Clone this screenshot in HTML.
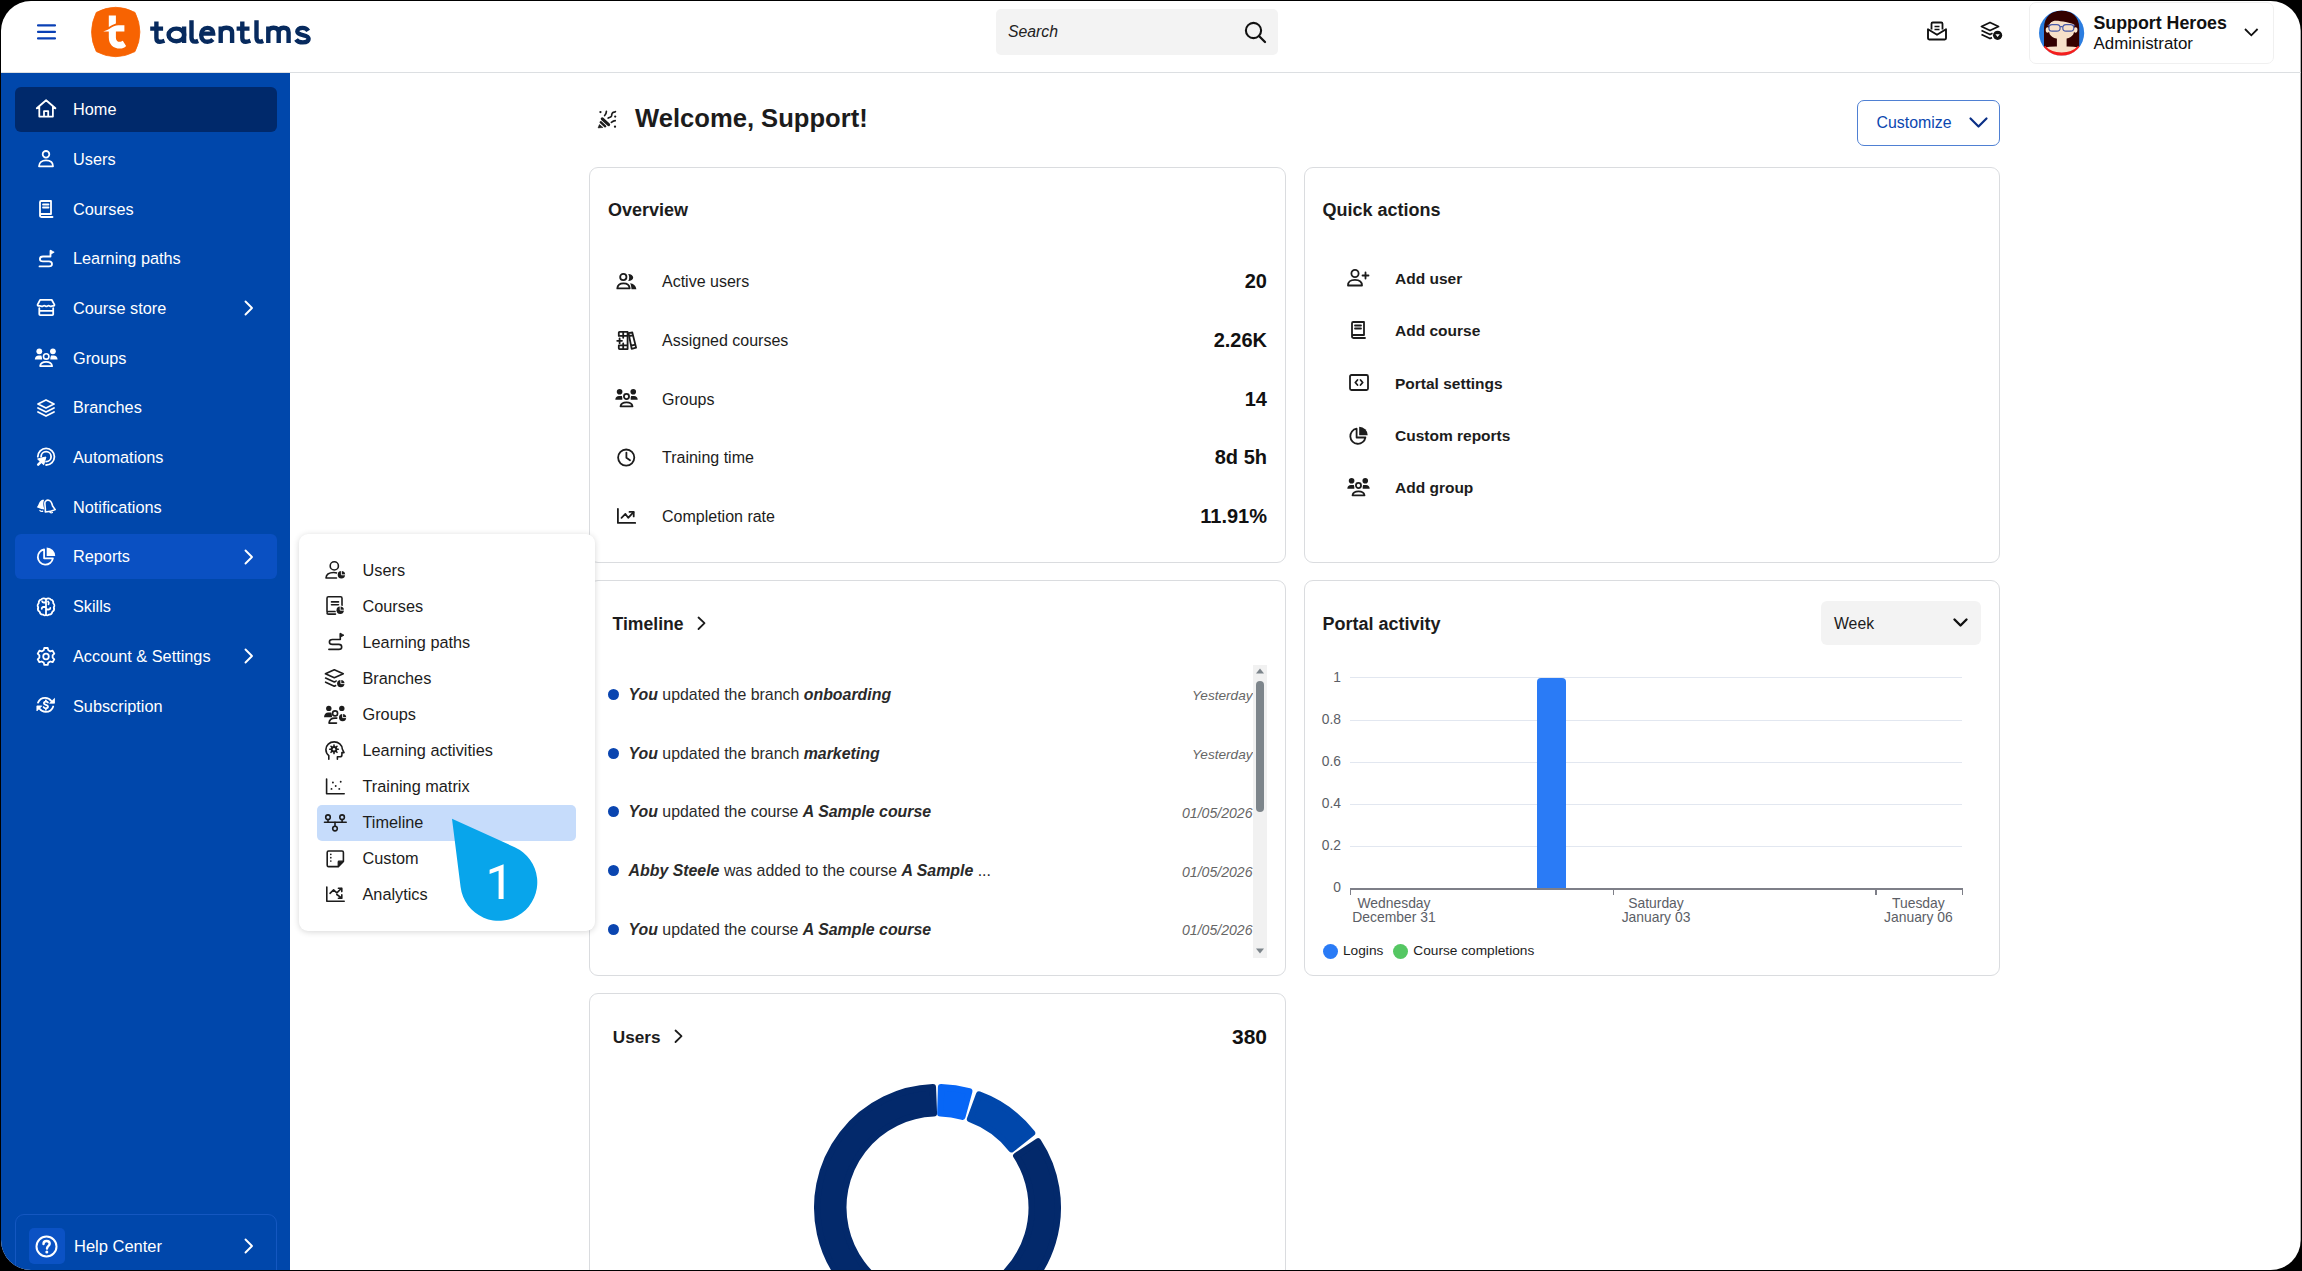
<!DOCTYPE html>
<html><head><meta charset="utf-8"><title>talentlms</title>
<style>
html,body{margin:0;padding:0;background:#000;width:2302px;height:1271px;overflow:hidden}
#frame{position:absolute;left:0;top:0;width:2302px;height:1271px;overflow:hidden;background:#fff;clip-path:inset(1px 1.3px 1px 1px round 30px)}
#ring{position:absolute;left:0;top:0;width:2302px;height:1271px;box-sizing:border-box;border:1px solid #000;border-right-width:2px;border-radius:31px;z-index:99;pointer-events:none}
.t{position:absolute;white-space:nowrap;line-height:1em;font-family:"Liberation Sans", sans-serif}
svg{overflow:visible}
</style></head><body>
<div id="frame">
<div style="position:absolute;left:0px;top:72px;width:2302px;height:1px;background:#dcdfe2"></div>
<svg style="position:absolute;left:36px;top:23px;" width="20" height="18" viewBox="0 0 20 18"><path d="M2 2.4H19M2 8.9H19M2 15.4H19" stroke="#0a40b5" stroke-width="2.1" stroke-linecap="round"/></svg>
<svg style="position:absolute;left:90px;top:6px;" width="52" height="52" viewBox="0 0 52 52"><path d="M6.3 6.4Q25.6 -3.8 45 6.4Q54.8 26 45 45.6Q25.6 55.8 6.3 45.6Q-3.2 26 6.3 6.4Z" fill="#f76302" stroke="#f76302" stroke-width="0.8" stroke-linejoin="round"/><path d="M18.8 9.5H25.9V17.4C23.5 18.2 21 19.5 18.8 21Z" fill="#fff"/><path d="M13.2 25.4C16 24.6 18.5 23.3 21 21.7C23.5 20.1 25.5 19.2 28.2 19.2H34.4V25.6H25.9V31.9C25.9 34.3 27.5 35.8 29.5 35.8C30.8 35.8 32 35.3 32.8 34.8L36.1 40C34.5 41.8 32.2 42.6 29.9 42.6C23.5 42.6 18.8 38.5 18.8 31.5V25.6Z" fill="#fff"/></svg>
<svg style="position:absolute;left:0px;top:0px;" width="400" height="72" viewBox="0 0 400 72"><g fill="none" stroke="#072a5e" stroke-width="4.4"><path d="M156.4 21.5V38C156.4 40.8 157.8 41.8 160 41.8C161.5 41.8 162.8 41.4 164.5 40.8M150.2 28.6H163.1"/><ellipse cx="176.4" cy="34.9" rx="7.8" ry="6.3"/><path d="M184.1 26.4V43"/><path d="M191.5 20.3V37.5C191.5 40.5 193 41.6 195 41.6C196.3 41.6 197.2 41.3 198.2 40.9"/><path d="M201.8 33.6H213.2C213.2 29.8 210.8 27.9 207.4 27.9C203.6 27.9 201.2 30.8 201.2 34.9C201.2 39 203.8 41.8 207.6 41.8C209.8 41.8 211.6 40.9 212.9 39.5"/><path d="M220.7 26.4V43M220.7 33C220.7 29.5 223 27.8 226.4 27.8C229.8 27.8 232.1 29.5 232.1 33V43"/><path d="M242.3 21.5V38C242.3 40.8 243.7 41.8 245.9 41.8C247.4 41.8 248.7 41.4 250.4 40.8M236.6 28.6H249.5"/><path d="M256.5 20.3V37.5C256.5 40.5 258 41.6 260 41.6C261.3 41.6 262.2 41.3 263.2 40.9"/><path d="M268.3 26.4V43M268.3 32.5C268.3 29.3 270.2 27.8 273.5 27.8C276.8 27.8 278.7 29.3 278.7 32.5V43M278.7 32.5C278.7 29.3 280.6 27.8 283.6 27.8C286.8 27.8 288.6 29.3 288.6 32.5V43"/><path d="M308.2 30.8C307 28.9 305.2 27.9 302.6 27.9C299.2 27.9 297.3 29.5 297.3 31.6C297.3 36.2 308.6 34 308.6 38.8C308.6 41 306.4 42.4 302.8 42.4C299.8 42.4 297.4 41.4 296 39.4"/></g></svg>
<div style="position:absolute;left:996px;top:9px;width:282px;height:46px;background:#f3f3f3;border-radius:5px"></div>
<div class="t" style="left:1008px;top:24.07px;font-size:15.8px;color:#222;font-weight:normal;font-style:italic;">Search</div>
<svg style="position:absolute;left:1244px;top:21px;" width="23" height="23" viewBox="0 0 23 23"><circle cx="9.5" cy="9.5" r="7.6" fill="none" stroke="#111" stroke-width="2.1"/><path d="M15 15L21 21" stroke="#111" stroke-width="2.3" stroke-linecap="round"/></svg>
<svg style="position:absolute;left:1926px;top:21px;" width="22" height="20" viewBox="0 0 22 20"><path d="M5.5 8.5V2.8C5.5 2 6 1.5 6.8 1.5H15.2C16 1.5 16.5 2 16.5 2.8V8.5" fill="none" stroke="#111" stroke-width="1.8"/><path d="M8.5 5.5H13.5M8.5 8.5H13.5" stroke="#111" stroke-width="1.7"/><path d="M2 8.2V17.3C2 18 2.5 18.5 3.2 18.5H18.8C19.5 18.5 20 18 20 17.3V8.2L11 13.8Z" fill="none" stroke="#111" stroke-width="1.9" stroke-linejoin="round"/></svg>
<svg style="position:absolute;left:1979px;top:21px;" width="24" height="20" viewBox="0 0 24 20"><path d="M11 1.5L19.5 5.5L11 9.5L2.5 5.5Z" fill="none" stroke="#111" stroke-width="1.8" stroke-linejoin="round"/><path d="M2.5 9.5L11 13.5L13.5 12.3M2.5 13.5L11 17.5L13 16.6" fill="none" stroke="#111" stroke-width="1.8" stroke-linejoin="round"/><circle cx="18.6" cy="14.3" r="4.6" fill="#111"/><path d="M16.4 13.2H20.8L18.6 15.9Z" fill="#fff"/></svg>
<div style="position:absolute;left:2029px;top:2px;width:245px;height:62px;border:1px solid #f0f0f0;border-radius:7px;box-sizing:border-box"></div>
<svg style="position:absolute;left:2039px;top:10px;" width="46" height="46" viewBox="0 0 46 46"><defs><clipPath id="av"><circle cx="22.6" cy="23" r="22.6"/></clipPath></defs>
<g clip-path="url(#av)"><rect x="-1" y="-1" width="48" height="48" fill="#2b7de0"/>
<path d="M5 37.5V18C5 7 12.5 0.6 22.6 0.6C32.7 0.6 40.2 7 40.2 18V37.5Z" fill="#330000"/>
<ellipse cx="8.6" cy="20" rx="1.9" ry="2.8" fill="#fbe6cf"/><ellipse cx="36.6" cy="20" rx="1.9" ry="2.8" fill="#fbe6cf"/>
<path d="M10 16C10 12 15 10 22.5 10C30 10 35.1 12 35.1 16V21C35.1 26 30 29.2 22.5 29.2C15 29.2 10 26 10 21Z" fill="#f7e0c9"/>
<path d="M9.5 15.5C10.5 12.5 13 10.8 15.7 10C19 11.2 28 11.5 35.6 14.5L35.8 9H9.2Z" fill="#330000"/>
<rect x="17.9" y="27" width="9.7" height="11" fill="#f7e0c9"/>
<path d="M-1 47V38.5C6 36.8 14 36.4 22.6 36.4C31 36.4 39 36.8 47 38.5V47Z" fill="#f7e0c9"/>
<path d="M4.5 37.2C9 42.6 15 44.6 22.6 44.6C30.2 44.6 36.2 42.6 40.7 37.2" fill="none" stroke="#f41d1d" stroke-width="4.2"/>
<rect x="9.9" y="14.6" width="11.2" height="6.6" rx="3.2" fill="none" stroke="#4a5aa8" stroke-width="1.2"/>
<rect x="23.8" y="14.6" width="11" height="6.6" rx="3.2" fill="none" stroke="#4a5aa8" stroke-width="1.2"/>
<path d="M21.1 16.6H23.8M8.6 15.2H10.5M34.3 15.2H36.2" stroke="#4a5aa8" stroke-width="1.1"/></g></svg>
<div class="t" style="left:2093.5px;top:14.67px;font-size:17.8px;color:#111;font-weight:bold;font-style:normal;">Support Heroes</div>
<div class="t" style="left:2093.5px;top:35.84px;font-size:16.9px;color:#111;font-weight:normal;font-style:normal;">Administrator</div>
<svg style="position:absolute;left:2243px;top:27px;" width="17" height="11" viewBox="0 0 17 11"><path d="M2 2L8.3 8.3L14.6 2" fill="none" stroke="#111" stroke-width="1.8"/></svg>
<div style="position:absolute;left:0px;top:73px;width:290px;height:1200px;background:#0047ab"></div>
<div style="position:absolute;left:15px;top:87px;width:262px;height:45px;background:#00296b;border-radius:6px"></div>
<div style="position:absolute;left:15px;top:533.5px;width:262px;height:45px;background:#0a50c2;border-radius:6px"></div>
<svg style="position:absolute;left:36px;top:99px;" width="20" height="20" viewBox="0 0 20 20"><path d="M0.8 9.3L10.1 1.2L19.4 9.3M3.3 7.5V17.6H16.9V7.5M8 17.6V12.2H12.2V17.6" stroke="#fff" fill="none" stroke-width="1.8" stroke-linecap="round" stroke-linejoin="round" stroke-width="1.9"/></svg>
<div class="t" style="left:73px;top:101.14px;font-size:16.3px;color:#fff;font-weight:normal;font-style:normal;">Home</div>
<svg style="position:absolute;left:36px;top:149.2px;" width="20" height="20" viewBox="0 0 20 20"><circle cx="10" cy="5.3" r="3.3" stroke="#fff" fill="none" stroke-width="1.8" stroke-linecap="round" stroke-linejoin="round"/><path d="M3 17.3C3 13.3 6 11.4 10 11.4C14 11.4 17 13.3 17 17.3Z" stroke="#fff" fill="none" stroke-width="1.8" stroke-linecap="round" stroke-linejoin="round"/></svg>
<div class="t" style="left:73px;top:150.84px;font-size:16.3px;color:#fff;font-weight:normal;font-style:normal;">Users</div>
<svg style="position:absolute;left:36px;top:198.9px;" width="20" height="20" viewBox="0 0 20 20"><path d="M4 17V3.2C4 2.5 4.5 2 5.2 2H15V15H5.5C4.6 15 4 15.7 4 16.5C4 17.3 4.6 18 5.5 18H16.5" stroke="#fff" fill="none" stroke-width="1.8" stroke-linecap="round" stroke-linejoin="round"/><path d="M7 5.5H12.5M7 8.5H12.5" stroke="#fff" fill="none" stroke-width="1.8" stroke-linecap="round" stroke-linejoin="round"/></svg>
<div class="t" style="left:73px;top:200.55px;font-size:16.3px;color:#fff;font-weight:normal;font-style:normal;">Courses</div>
<svg style="position:absolute;left:36px;top:248.60000000000002px;" width="20" height="20" viewBox="0 0 20 20"><path d="M14.5 7.5H7C5 7.5 3.9 8.7 3.9 10C3.9 11.3 5 12.4 7 12.4H13C15 12.4 16 13.6 16 15C16 16.4 15 17.4 13 17.4H3.5M14.5 7.5V1.8" stroke="#fff" fill="none" stroke-width="1.8" stroke-linecap="round" stroke-linejoin="round"/><path d="M14.5 1.2L18.2 3.2L14.5 5.2Z" fill="#fff" stroke="#fff" stroke-width="0.8" stroke-linejoin="round"/></svg>
<div class="t" style="left:73px;top:250.25px;font-size:16.3px;color:#fff;font-weight:normal;font-style:normal;">Learning paths</div>
<svg style="position:absolute;left:36px;top:298.3px;" width="20" height="20" viewBox="0 0 20 20"><path d="M4.1 1.8H15.7L18.4 6.6C18.6 7.5 17.9 8.1 17 7.9C16.3 7.7 15.5 8.4 14.8 8.4C14 8.4 13.4 7.6 12.6 7.6C11.8 7.6 11.2 8.4 10.4 8.4C9.6 8.4 9 7.6 8.2 7.6C7.4 7.6 6.8 8.4 6 8.4C5.2 8.4 4.4 7.7 3.4 7.9C2.3 8.1 1.3 7.5 1.6 6.6Z" stroke="#fff" fill="none" stroke-width="1.8" stroke-linecap="round" stroke-linejoin="round" stroke-width="1.7"/><path d="M3.3 10.1V16.3C3.3 16.9 3.8 17.2 4.3 17.2H16.2C16.7 17.2 17.2 16.9 17.2 16.3V10.1M3.3 12.8H17.2" stroke="#fff" fill="none" stroke-width="1.8" stroke-linecap="round" stroke-linejoin="round"/></svg>
<div class="t" style="left:73px;top:299.94px;font-size:16.3px;color:#fff;font-weight:normal;font-style:normal;">Course store</div>
<svg style="position:absolute;left:35px;top:348.0px;" width="20" height="20" viewBox="0 0 20 20"><circle cx="4.3" cy="3.3" r="2.9" fill="#fff"/><circle cx="17.9" cy="3.3" r="2.9" fill="#fff"/><path d="M-0.2 11.6C0 9 1.5 7.6 3.8 7.6H6.3C6.8 8.8 7.1 10 7.1 11.6Z" fill="#fff"/><path d="M22.6 11.6C22.4 9 20.9 7.6 18.6 7.6H16.1C15.6 8.8 15.3 10 15.3 11.6Z" fill="#fff"/><circle cx="11.2" cy="8.4" r="2.7" stroke="#fff" stroke-width="1.6" fill="none"/><path d="M5 18.1C5.5 15 8 13.9 11.1 13.9C14.2 13.9 16.7 15 17.2 18.1Z" stroke="#fff" stroke-width="1.6" fill="none" stroke-linejoin="round"/></svg>
<div class="t" style="left:73px;top:349.64px;font-size:16.3px;color:#fff;font-weight:normal;font-style:normal;">Groups</div>
<svg style="position:absolute;left:36px;top:397.7px;" width="20" height="20" viewBox="0 0 20 20"><path d="M10 2L18 6L10 10L2 6Z" stroke="#fff" fill="none" stroke-width="1.8" stroke-linecap="round" stroke-linejoin="round"/><path d="M2 10L10 14L18 10M2 14L10 18L18 14" stroke="#fff" fill="none" stroke-width="1.8" stroke-linecap="round" stroke-linejoin="round"/></svg>
<div class="t" style="left:73px;top:399.34px;font-size:16.3px;color:#fff;font-weight:normal;font-style:normal;">Branches</div>
<svg style="position:absolute;left:36px;top:447.4px;" width="20" height="20" viewBox="0 0 20 20"><path d="M1.8 9.7A8.3 8.3 0 1 1 10.1 18M5.1 9.7A5 5 0 1 1 10.1 14.7" stroke="#fff" fill="none" stroke-width="1.8" stroke-linecap="round" stroke-linejoin="round"/><path d="M9.9 10L1.6 12L7.7 17.8Z" fill="#fff" stroke="#fff" stroke-width="1" stroke-linejoin="round"/><path d="M2.2 17.6L5.5 14.3" stroke="#fff" stroke-width="2.5" stroke-linecap="round"/></svg>
<div class="t" style="left:73px;top:449.04px;font-size:16.3px;color:#fff;font-weight:normal;font-style:normal;">Automations</div>
<svg style="position:absolute;left:36px;top:497.1px;" width="20" height="20" viewBox="0 0 20 20"><path d="M0.8 10.3C2.3 8.8 2.8 6.5 3.8 4.8C4.8 3.2 6.3 2.6 8.2 2.8C7.2 4.6 7.1 7.2 7.6 9.6L8.4 12.5C5.8 12.3 3.3 11.6 0.8 10.3Z" fill="#fff"/><path d="M4 13.6Q5 14.7 6.6 14.3M14 15.3Q15.2 16.3 16.4 15.5" stroke="#fff" stroke-width="1.4" fill="none" stroke-linecap="round"/><path d="M9.3 4.6C10.3 3.2 12.2 2.9 13.7 3.6C15.6 4.5 16.1 6.9 16.6 9L19.2 12.6C16.2 14.1 12.3 14.8 9.3 15C9.6 12 9.1 9.2 8.9 7.2C8.8 6.1 8.9 5.2 9.3 4.6Z" stroke="#fff" stroke-width="1.6" fill="none" stroke-linejoin="round"/></svg>
<div class="t" style="left:73px;top:498.75px;font-size:16.3px;color:#fff;font-weight:normal;font-style:normal;">Notifications</div>
<svg style="position:absolute;left:36px;top:546.8px;" width="20" height="20" viewBox="0 0 20 20"><path d="M8.1 2.5A7.6 7.6 0 1 0 16.9 11.3H8.1Z" stroke="#fff" fill="none" stroke-width="1.8" stroke-linecap="round" stroke-linejoin="round"/><path d="M10.7 0.5V9.1H19.2A8.5 8.5 0 0 0 10.7 0.5Z" fill="#fff"/></svg>
<div class="t" style="left:73px;top:548.44px;font-size:16.3px;color:#fff;font-weight:normal;font-style:normal;">Reports</div>
<svg style="position:absolute;left:36px;top:596.5px;" width="20" height="20" viewBox="0 0 20 20"><path d="M10 2.2C8.6 0.9 6.2 1 5 2.7C3.3 3 2.5 4.6 2.8 6.1C1.5 7.1 1.3 9.2 2.2 10.4C1.6 12 2.2 14 3.6 14.7C3.9 16.6 5.6 17.8 7.3 17.6C8.3 18.6 9.3 18.6 10 17.9C10.7 18.6 11.7 18.6 12.7 17.6C14.4 17.8 16.1 16.6 16.4 14.7C17.8 14 18.4 12 17.8 10.4C18.7 9.2 18.5 7.1 17.2 6.1C17.5 4.6 16.7 3 15 2.7C13.8 1 11.4 0.9 10 2.2Z" stroke="#fff" fill="none" stroke-width="1.8" stroke-linecap="round" stroke-linejoin="round" stroke-width="1.7"/><path d="M10 2.5V17.6M10 5.5H8C7 5.5 6.3 5 6.2 4.3M10 10H7.3C6.3 10 5.8 10.8 5.8 11.8M10 12.5H12.8C13.8 12.5 14.3 11.8 14.3 11M12 4.5C12.8 5.2 13 6.5 12.5 7.3" stroke="#fff" fill="none" stroke-width="1.8" stroke-linecap="round" stroke-linejoin="round" stroke-width="1.4"/></svg>
<div class="t" style="left:73px;top:598.14px;font-size:16.3px;color:#fff;font-weight:normal;font-style:normal;">Skills</div>
<svg style="position:absolute;left:36px;top:646.2px;" width="20" height="20" viewBox="0 0 20 20"><path d="M8.3 2H11.7L12.3 4.3L14.3 5.4L16.6 4.7L18.3 7.6L16.6 9.3V11.6L18.3 13.3L16.6 16.2L14.3 15.5L12.3 16.6L11.7 18.9H8.3L7.7 16.6L5.7 15.5L3.4 16.2L1.7 13.3L3.4 11.6V9.3L1.7 7.6L3.4 4.7L5.7 5.4L7.7 4.3Z" stroke="#fff" fill="none" stroke-width="1.8" stroke-linecap="round" stroke-linejoin="round"/><circle cx="10" cy="10.5" r="2.8" stroke="#fff" fill="none" stroke-width="1.8" stroke-linecap="round" stroke-linejoin="round"/></svg>
<div class="t" style="left:73px;top:647.85px;font-size:16.3px;color:#fff;font-weight:normal;font-style:normal;">Account &amp; Settings</div>
<svg style="position:absolute;left:36px;top:695.9px;" width="20" height="20" viewBox="0 0 20 20"><path d="M2 6.6C3.3 3.5 6 1.8 9.2 1.8C11.8 1.8 14 3 15.3 5" stroke="#fff" fill="none" stroke-width="1.8" stroke-linecap="round" stroke-linejoin="round" stroke-width="1.9"/><path d="M18.5 2.4V7.2H13.6Z" fill="#fff" stroke="#fff" stroke-width="0.8" stroke-linejoin="round"/><path d="M17.2 10.5C16.2 13.8 13.2 15.9 9.7 15.9C7.2 15.9 5 14.8 3.6 12.8" stroke="#fff" fill="none" stroke-width="1.8" stroke-linecap="round" stroke-linejoin="round" stroke-width="1.9"/><path d="M0.9 9.9H5.8L0.9 14.9Z" fill="#fff" stroke="#fff" stroke-width="0.8" stroke-linejoin="round"/><path d="M11.9 6.6C11.5 6 10.8 5.7 9.9 5.7C8.7 5.7 7.9 6.4 7.9 7.3C7.9 9.3 12 8.4 12 10.6C12 11.6 11.1 12.3 9.8 12.3C8.8 12.3 8 11.8 7.6 11.1M9.9 4.3V5.7M9.9 12.3V13.8" stroke="#fff" fill="none" stroke-width="1.8" stroke-linecap="round" stroke-linejoin="round" stroke-width="1.5"/></svg>
<div class="t" style="left:73px;top:697.54px;font-size:16.3px;color:#fff;font-weight:normal;font-style:normal;">Subscription</div>
<svg style="position:absolute;left:243px;top:300.3px;" width="12" height="16" viewBox="0 0 12 16"><path d="M2.5 1.5L9 8L2.5 14.5" fill="none" stroke="#fff" stroke-width="1.9" stroke-linecap="round" stroke-linejoin="round"/></svg>
<svg style="position:absolute;left:243px;top:548.8px;" width="12" height="16" viewBox="0 0 12 16"><path d="M2.5 1.5L9 8L2.5 14.5" fill="none" stroke="#fff" stroke-width="1.9" stroke-linecap="round" stroke-linejoin="round"/></svg>
<svg style="position:absolute;left:243px;top:648.2px;" width="12" height="16" viewBox="0 0 12 16"><path d="M2.5 1.5L9 8L2.5 14.5" fill="none" stroke="#fff" stroke-width="1.9" stroke-linecap="round" stroke-linejoin="round"/></svg>
<div style="position:absolute;left:15px;top:1214px;width:262px;height:70px;border:1px solid #1457c0;border-radius:9px;box-sizing:border-box"></div>
<div style="position:absolute;left:29px;top:1228px;width:36px;height:36px;background:#0b52c4;border-radius:5px"></div>
<svg style="position:absolute;left:35px;top:1235px;" width="24" height="24" viewBox="0 0 24 24"><circle cx="11.5" cy="11.5" r="10" fill="none" stroke="#fff" stroke-width="2"/><path d="M8.5 9C8.5 7.2 9.8 6 11.6 6C13.4 6 14.7 7.2 14.7 8.8C14.7 10.8 12 11 12 13.5" fill="none" stroke="#fff" stroke-width="2.4" stroke-linecap="round"/><circle cx="11.8" cy="17" r="1.5" fill="#fff"/></svg>
<div class="t" style="left:74px;top:1237.97px;font-size:16.5px;color:#fff;font-weight:normal;font-style:normal;">Help Center</div>
<svg style="position:absolute;left:243px;top:1238px;" width="12" height="16" viewBox="0 0 12 16"><path d="M2.5 1.5L9 8L2.5 14.5" fill="none" stroke="#fff" stroke-width="1.9" stroke-linecap="round" stroke-linejoin="round"/></svg>
<svg style="position:absolute;left:597px;top:110px;" width="21" height="20" viewBox="0 0 21 20"><path d="M1.1 17.9L2.4 14.6L5.9 17.5Z" fill="#1c1c1c" stroke="#1c1c1c" stroke-width="0.6" stroke-linejoin="round"/><path d="M3.7 12.2L8.2 16.3" stroke="#1c1c1c" stroke-width="2.3" stroke-linecap="round"/><path d="M5.3 8.9L11.6 14.6" stroke="#1c1c1c" stroke-width="3.1" stroke-linecap="round"/><circle cx="3.45" cy="2.1" r="1.15" fill="#1c1c1c"/><circle cx="18.2" cy="6.6" r="1.15" fill="#1c1c1c"/><circle cx="18" cy="16.7" r="1.15" fill="#1c1c1c"/><path d="M9.4 1.4C9.3 3.2 8.8 4.7 7.6 5.6M11.1 8.1C12.3 7.3 13.9 7.5 14.5 6C15 4.6 14.4 3.5 15.9 2.5C16.8 1.9 17.7 2.2 18.4 1.6M14.4 12.4C15.6 11.4 16.8 10.7 18.2 10.7" fill="none" stroke="#1c1c1c" stroke-width="1.7" stroke-linecap="round"/></svg>
<div class="t" style="left:635px;top:106.24px;font-size:25.6px;color:#1c1c1c;font-weight:bold;font-style:normal;">Welcome, Support!</div>
<div style="position:absolute;left:1857px;top:100px;width:143px;height:46px;border:1.5px solid #4f80d3;border-radius:7px;box-sizing:border-box"></div>
<div class="t" style="left:1876.5px;top:114.98px;font-size:15.9px;color:#0b47b0;font-weight:normal;font-style:normal;">Customize</div>
<svg style="position:absolute;left:1968px;top:116px;" width="21" height="13" viewBox="0 0 21 13"><path d="M2.5 2.5L10.5 10.5L18.5 2.5" fill="none" stroke="#0a2f86" stroke-width="2.2" stroke-linecap="round" stroke-linejoin="round"/></svg>
<div style="position:absolute;left:589px;top:167px;width:697px;height:396px;border:1px solid #dadcdf;border-radius:9px;box-sizing:border-box;background:#fff"></div>
<div style="position:absolute;left:1304px;top:167px;width:696px;height:396px;border:1px solid #dadcdf;border-radius:9px;box-sizing:border-box;background:#fff"></div>
<div style="position:absolute;left:589px;top:580px;width:697px;height:396px;border:1px solid #dadcdf;border-radius:9px;box-sizing:border-box;background:#fff"></div>
<div style="position:absolute;left:1304px;top:580px;width:696px;height:396px;border:1px solid #dadcdf;border-radius:9px;box-sizing:border-box;background:#fff"></div>
<div style="position:absolute;left:589px;top:993px;width:697px;height:400px;border:1px solid #dadcdf;border-radius:9px;box-sizing:border-box;background:#fff"></div>
<div class="t" style="left:608px;top:200.70px;font-size:18px;color:#1c1c1c;font-weight:bold;font-style:normal;">Overview</div>
<svg style="position:absolute;left:615.5px;top:271.5px;" width="21" height="20" viewBox="0 0 21 20"><circle cx="7.3" cy="5" r="3.15" stroke="#1c1c1c" fill="none" stroke-width="1.8" stroke-linecap="round" stroke-linejoin="round" stroke-width="1.7"/><path d="M1.3 16.4C1.6 13 4 11.3 7.5 11.3C11 11.3 13.4 13 13.7 16.4Z" stroke="#1c1c1c" fill="none" stroke-width="1.8" stroke-linecap="round" stroke-linejoin="round" stroke-width="1.7"/><path d="M12.2 1.9C15 1.9 17.2 3.5 17.2 5.45C17.2 7.4 15 9 12.2 9C12.9 8 13.2 6.8 13.2 5.45C13.2 4.1 12.9 2.9 12.2 1.9Z" fill="#1c1c1c"/><path d="M14 11.3C17.5 11.5 19.8 13.5 20.4 17.2H15.5C15.3 14.5 14.9 12.6 14 11.3Z" fill="#1c1c1c"/></svg>
<div class="t" style="left:662px;top:274.40px;font-size:16px;color:#1c1c1c;font-weight:normal;font-style:normal;">Active users</div>
<div class="t" style="right:1035px;top:271.00px;font-size:20px;color:#111;font-weight:bold;font-style:normal;">20</div>
<svg style="position:absolute;left:615.5px;top:330.5px;" width="21" height="20" viewBox="0 0 21 20"><path d="M3.6 0.9H11.6V4.9H2.8V1.7C2.8 1.2 3.1 0.9 3.6 0.9ZM2.8 14.4H11.6V18.1H3.6C3.1 18.1 2.8 17.8 2.8 17.3ZM7.2 0.9V6.8M7.2 12.4V18.1M11.6 4.9V14.4" stroke="#1c1c1c" fill="none" stroke-width="1.8" stroke-linecap="round" stroke-linejoin="round" stroke-width="1.7"/><path d="M12.5 2.1L16.3 1.5L20.1 16.6L15.7 17.8ZM13.2 5L17 4.3M15.1 14.6L19.4 13.6" stroke="#1c1c1c" fill="none" stroke-width="1.8" stroke-linecap="round" stroke-linejoin="round" stroke-width="1.7"/><path d="M1.2 9.8H6M3.6 7.4V12.2" stroke="#1c1c1c" fill="none" stroke-width="1.8" stroke-linecap="round" stroke-linejoin="round" stroke-width="1.8"/></svg>
<div class="t" style="left:662px;top:333.40px;font-size:16px;color:#1c1c1c;font-weight:normal;font-style:normal;">Assigned courses</div>
<div class="t" style="right:1035px;top:330.00px;font-size:20px;color:#111;font-weight:bold;font-style:normal;">2.26K</div>
<svg style="position:absolute;left:615.5px;top:388.5px;" width="21" height="20" viewBox="0 0 21 20"><circle cx="3.6" cy="2.8" r="2.8" fill="#1c1c1c"/><circle cx="17.25" cy="2.8" r="2.8" fill="#1c1c1c"/><path d="M-0.7 10.8C-0.5 8.3 0.8 7.05 3 7.05H5.9C6.3 8.2 6.4 9.5 6.3 10.8Z" fill="#1c1c1c"/><path d="M21.7 10.8C21.5 8.3 20.2 7.05 18 7.05H15.1C14.7 8.2 14.6 9.5 14.7 10.8Z" fill="#1c1c1c"/><circle cx="10.48" cy="7.5" r="2.55" stroke="#1c1c1c" fill="none" stroke-width="1.8" stroke-linecap="round" stroke-linejoin="round" stroke-width="1.6"/><path d="M4.5 17.3C5 14.5 7.2 13.4 10.5 13.4C13.8 13.4 16 14.5 16.5 17.3Z" stroke="#1c1c1c" fill="none" stroke-width="1.8" stroke-linecap="round" stroke-linejoin="round" stroke-width="1.6"/></svg>
<div class="t" style="left:662px;top:391.90px;font-size:16px;color:#1c1c1c;font-weight:normal;font-style:normal;">Groups</div>
<div class="t" style="right:1035px;top:388.50px;font-size:20px;color:#111;font-weight:bold;font-style:normal;">14</div>
<svg style="position:absolute;left:615.5px;top:447.5px;" width="21" height="20" viewBox="0 0 21 20"><circle cx="10.2" cy="9.6" r="8.1" stroke="#1c1c1c" fill="none" stroke-width="1.8" stroke-linecap="round" stroke-linejoin="round"/><path d="M10.4 4.6V9.8L14 12.3" stroke="#1c1c1c" fill="none" stroke-width="1.8" stroke-linecap="round" stroke-linejoin="round"/></svg>
<div class="t" style="left:662px;top:450.40px;font-size:16px;color:#1c1c1c;font-weight:normal;font-style:normal;">Training time</div>
<div class="t" style="right:1035px;top:447.00px;font-size:20px;color:#111;font-weight:bold;font-style:normal;">8d 5h</div>
<svg style="position:absolute;left:615.5px;top:506.5px;" width="21" height="20" viewBox="0 0 21 20"><path d="M1.9 1.8V15.9H19.2" stroke="#1c1c1c" fill="none" stroke-width="1.8" stroke-linecap="round" stroke-linejoin="round"/><path d="M5.5 10.8L9.4 6.9L12.2 10.8L17.5 5.1" stroke="#1c1c1c" fill="none" stroke-width="1.8" stroke-linecap="round" stroke-linejoin="round"/><path d="M13.5 4.9H17.7V9.4" stroke="#1c1c1c" fill="none" stroke-width="1.8" stroke-linecap="round" stroke-linejoin="round"/></svg>
<div class="t" style="left:662px;top:509.40px;font-size:16px;color:#1c1c1c;font-weight:normal;font-style:normal;">Completion rate</div>
<div class="t" style="right:1035px;top:506.00px;font-size:20px;color:#111;font-weight:bold;font-style:normal;">11.91%</div>
<div class="t" style="left:1322.5px;top:200.70px;font-size:18px;color:#1c1c1c;font-weight:bold;font-style:normal;">Quick actions</div>
<svg style="position:absolute;left:1347px;top:267.5px;" width="23" height="20" viewBox="0 0 23 20"><circle cx="8" cy="5.5" r="3.6" stroke="#1c1c1c" fill="none" stroke-width="1.8" stroke-linecap="round" stroke-linejoin="round"/><path d="M1 17.5C1 13.5 3.5 11.8 8 11.8C12.5 11.8 15 13.5 15 17.5Z" stroke="#1c1c1c" fill="none" stroke-width="1.8" stroke-linecap="round" stroke-linejoin="round"/><path d="M18.5 4.5V10.5M15.5 7.5H21.5" stroke="#1c1c1c" fill="none" stroke-width="1.8" stroke-linecap="round" stroke-linejoin="round"/></svg>
<div class="t" style="left:1395px;top:270.82px;font-size:15.5px;color:#1c1c1c;font-weight:bold;font-style:normal;">Add user</div>
<svg style="position:absolute;left:1348px;top:319.9px;" width="23" height="20" viewBox="0 0 23 20"><path d="M4 17V3.2C4 2.5 4.5 2 5.2 2H16V15H5.5C4.6 15 4 15.7 4 16.5C4 17.3 4.6 18 5.5 18H17" stroke="#1c1c1c" fill="none" stroke-width="1.8" stroke-linecap="round" stroke-linejoin="round"/><path d="M7 5.5H13M7 8.5H13" stroke="#1c1c1c" fill="none" stroke-width="1.8" stroke-linecap="round" stroke-linejoin="round"/></svg>
<div class="t" style="left:1395px;top:323.22px;font-size:15.5px;color:#1c1c1c;font-weight:bold;font-style:normal;">Add course</div>
<svg style="position:absolute;left:1348px;top:372.3px;" width="23" height="20" viewBox="0 0 23 20"><rect x="2" y="3" width="18" height="15" rx="1.5" stroke="#1c1c1c" fill="none" stroke-width="1.8" stroke-linecap="round" stroke-linejoin="round"/><path d="M9.5 8L7.3 10.5L9.5 13M12.5 8L14.7 10.5L12.5 13" stroke="#1c1c1c" fill="none" stroke-width="1.8" stroke-linecap="round" stroke-linejoin="round" stroke-width="1.6"/></svg>
<div class="t" style="left:1395px;top:375.62px;font-size:15.5px;color:#1c1c1c;font-weight:bold;font-style:normal;">Portal settings</div>
<svg style="position:absolute;left:1348px;top:424.7px;" width="23" height="20" viewBox="0 0 23 20"><g transform="translate(0.5 1.2)"><path d="M8.1 2.5A7.6 7.6 0 1 0 16.9 11.3H8.1Z" stroke="#1c1c1c" fill="none" stroke-width="1.8" stroke-linecap="round" stroke-linejoin="round"/><path d="M10.7 0.5V9.1H19.2A8.5 8.5 0 0 0 10.7 0.5Z" fill="#1c1c1c"/></g></svg>
<div class="t" style="left:1395px;top:428.02px;font-size:15.5px;color:#1c1c1c;font-weight:bold;font-style:normal;">Custom reports</div>
<svg style="position:absolute;left:1348px;top:478.40000000000003px;" width="23" height="20" viewBox="0 0 23 20"><circle cx="3.6" cy="2.8" r="2.8" fill="#1c1c1c"/><circle cx="17.25" cy="2.8" r="2.8" fill="#1c1c1c"/><path d="M-0.7 10.8C-0.5 8.3 0.8 7.05 3 7.05H5.9C6.3 8.2 6.4 9.5 6.3 10.8Z" fill="#1c1c1c"/><path d="M21.7 10.8C21.5 8.3 20.2 7.05 18 7.05H15.1C14.7 8.2 14.6 9.5 14.7 10.8Z" fill="#1c1c1c"/><circle cx="10.48" cy="7.5" r="2.55" stroke="#1c1c1c" fill="none" stroke-width="1.8" stroke-linecap="round" stroke-linejoin="round" stroke-width="1.6"/><path d="M4.5 17.3C5 14.5 7.2 13.4 10.5 13.4C13.8 13.4 16 14.5 16.5 17.3Z" stroke="#1c1c1c" fill="none" stroke-width="1.8" stroke-linecap="round" stroke-linejoin="round" stroke-width="1.6"/></svg>
<div class="t" style="left:1395px;top:480.43px;font-size:15.5px;color:#1c1c1c;font-weight:bold;font-style:normal;">Add group</div>
<div class="t" style="left:612.5px;top:615.54px;font-size:17.6px;color:#1c1c1c;font-weight:bold;font-style:normal;">Timeline</div>
<svg style="position:absolute;left:696px;top:616px;" width="12" height="15" viewBox="0 0 12 15"><path d="M2.5 1.5L8.5 7.2L2.5 13" fill="none" stroke="#1c1c1c" stroke-width="1.8" stroke-linecap="round" stroke-linejoin="round"/></svg>
<div style="position:absolute;left:608px;top:688.7px;width:11px;height:11px;background:#0a45b0;border-radius:50%"></div>
<div class="t" style="left:628.5px;top:686.69px;font-size:15.9px;color:#2a2a2a;font-weight:normal;font-style:normal;"><b><i>You</i></b> updated the branch <b><i>onboarding</i></b></div>
<div class="t" style="right:1049.5px;top:688.64px;font-size:13.6px;color:#666;font-weight:normal;font-style:italic;">Yesterday</div>
<div style="position:absolute;left:608px;top:747.7px;width:11px;height:11px;background:#0a45b0;border-radius:50%"></div>
<div class="t" style="left:628.5px;top:745.69px;font-size:15.9px;color:#2a2a2a;font-weight:normal;font-style:normal;"><b><i>You</i></b> updated the branch <b><i>marketing</i></b></div>
<div class="t" style="right:1049.5px;top:747.64px;font-size:13.6px;color:#666;font-weight:normal;font-style:italic;">Yesterday</div>
<div style="position:absolute;left:608px;top:806.4px;width:11px;height:11px;background:#0a45b0;border-radius:50%"></div>
<div class="t" style="left:628.5px;top:804.38px;font-size:15.9px;color:#2a2a2a;font-weight:normal;font-style:normal;"><b><i>You</i></b> updated the course <b><i>A Sample course</i></b></div>
<div class="t" style="right:1049.5px;top:805.91px;font-size:14.1px;color:#666;font-weight:normal;font-style:italic;">01/05/2026</div>
<div style="position:absolute;left:608px;top:865.1px;width:11px;height:11px;background:#0a45b0;border-radius:50%"></div>
<div class="t" style="left:628.5px;top:863.09px;font-size:15.9px;color:#2a2a2a;font-weight:normal;font-style:normal;"><b><i>Abby Steele</i></b> was added to the course <b><i>A Sample</i></b> ...</div>
<div class="t" style="right:1049.5px;top:864.62px;font-size:14.1px;color:#666;font-weight:normal;font-style:italic;">01/05/2026</div>
<div style="position:absolute;left:608px;top:923.8px;width:11px;height:11px;background:#0a45b0;border-radius:50%"></div>
<div class="t" style="left:628.5px;top:921.78px;font-size:15.9px;color:#2a2a2a;font-weight:normal;font-style:normal;"><b><i>You</i></b> updated the course <b><i>A Sample course</i></b></div>
<div class="t" style="right:1049.5px;top:923.31px;font-size:14.1px;color:#666;font-weight:normal;font-style:italic;">01/05/2026</div>
<div style="position:absolute;left:1253px;top:665px;width:14px;height:293px;background:#f1f1f1"></div>
<div style="position:absolute;left:1256.3px;top:680.7px;width:7.5px;height:131px;background:#7d858b;border-radius:4px"></div>
<svg style="position:absolute;left:1255px;top:667px;" width="10" height="8" viewBox="0 0 10 8"><path d="M5 1.5L9 6.5H1Z" fill="#7d858b"/></svg>
<svg style="position:absolute;left:1255px;top:947px;" width="10" height="8" viewBox="0 0 10 8"><path d="M1 1.5H9L5 6.5Z" fill="#7d858b"/></svg>
<div class="t" style="left:1322.5px;top:615.20px;font-size:18px;color:#1c1c1c;font-weight:bold;font-style:normal;">Portal activity</div>
<div style="position:absolute;left:1821px;top:601px;width:160px;height:44px;background:#f3f3f3;border-radius:6px"></div>
<div class="t" style="left:1834px;top:615.97px;font-size:15.8px;color:#1c1c1c;font-weight:normal;font-style:normal;">Week</div>
<svg style="position:absolute;left:1952px;top:617px;" width="17" height="12" viewBox="0 0 17 12"><path d="M2.5 2.5L8.5 8.5L14.5 2.5" fill="none" stroke="#111" stroke-width="2.4" stroke-linecap="round" stroke-linejoin="round"/></svg>
<div style="position:absolute;left:1350px;top:677.4px;width:612px;height:1px;background:#e2e7f0"></div>
<div style="position:absolute;left:1350px;top:719.5px;width:612px;height:1px;background:#e2e7f0"></div>
<div style="position:absolute;left:1350px;top:761.6px;width:612px;height:1px;background:#e2e7f0"></div>
<div style="position:absolute;left:1350px;top:803.7px;width:612px;height:1px;background:#e2e7f0"></div>
<div style="position:absolute;left:1350px;top:845.8px;width:612px;height:1px;background:#e2e7f0"></div>
<div class="t" style="right:961px;top:670.67px;font-size:13.8px;color:#5b5e66;font-weight:normal;font-style:normal;">1</div>
<div class="t" style="right:961px;top:712.77px;font-size:13.8px;color:#5b5e66;font-weight:normal;font-style:normal;">0.8</div>
<div class="t" style="right:961px;top:754.87px;font-size:13.8px;color:#5b5e66;font-weight:normal;font-style:normal;">0.6</div>
<div class="t" style="right:961px;top:796.97px;font-size:13.8px;color:#5b5e66;font-weight:normal;font-style:normal;">0.4</div>
<div class="t" style="right:961px;top:839.07px;font-size:13.8px;color:#5b5e66;font-weight:normal;font-style:normal;">0.2</div>
<div class="t" style="right:961px;top:881.17px;font-size:13.8px;color:#5b5e66;font-weight:normal;font-style:normal;">0</div>
<div style="position:absolute;left:1350px;top:888px;width:612.5px;height:2px;background:#7e7f88"></div>
<div style="position:absolute;left:1349.5px;top:889px;width:1.5px;height:6px;background:#7e7f88"></div>
<div style="position:absolute;left:1612.5px;top:889px;width:1.5px;height:6px;background:#7e7f88"></div>
<div style="position:absolute;left:1875px;top:889px;width:1.5px;height:6px;background:#7e7f88"></div>
<div style="position:absolute;left:1961.5px;top:889px;width:1.5px;height:6px;background:#7e7f88"></div>
<div style="position:absolute;left:1537px;top:678px;width:29px;height:210px;background:#2a7bf6;border-radius:4px 4px 0 0"></div>
<div class="t" style="left:1094px;width:600px;text-align:center;top:896.68px;font-size:13.9px;color:#5b5e66;font-weight:normal;font-style:normal;">Wednesday</div>
<div class="t" style="left:1094px;width:600px;text-align:center;top:910.88px;font-size:13.9px;color:#5b5e66;font-weight:normal;font-style:normal;">December 31</div>
<div class="t" style="left:1356px;width:600px;text-align:center;top:896.68px;font-size:13.9px;color:#5b5e66;font-weight:normal;font-style:normal;">Saturday</div>
<div class="t" style="left:1356px;width:600px;text-align:center;top:910.88px;font-size:13.9px;color:#5b5e66;font-weight:normal;font-style:normal;">January 03</div>
<div class="t" style="left:1618.4px;width:600px;text-align:center;top:896.68px;font-size:13.9px;color:#5b5e66;font-weight:normal;font-style:normal;">Tuesday</div>
<div class="t" style="left:1618.4px;width:600px;text-align:center;top:910.88px;font-size:13.9px;color:#5b5e66;font-weight:normal;font-style:normal;">January 06</div>
<div style="position:absolute;left:1322.5px;top:943.8px;width:15.2px;height:15.2px;background:#2a7bf6;border-radius:50%"></div>
<div class="t" style="left:1343px;top:944.36px;font-size:13.7px;color:#1c1c1c;font-weight:normal;font-style:normal;">Logins</div>
<div style="position:absolute;left:1393px;top:943.8px;width:15.2px;height:15.2px;background:#55c763;border-radius:50%"></div>
<div class="t" style="left:1413.3px;top:944.36px;font-size:13.7px;color:#1c1c1c;font-weight:normal;font-style:normal;">Course completions</div>
<div class="t" style="left:612.8px;top:1028.58px;font-size:17.2px;color:#1c1c1c;font-weight:bold;font-style:normal;">Users</div>
<svg style="position:absolute;left:672.5px;top:1029px;" width="12" height="15" viewBox="0 0 12 15"><path d="M2.5 1.5L8.5 7.2L2.5 13" fill="none" stroke="#1c1c1c" stroke-width="1.8" stroke-linecap="round" stroke-linejoin="round"/></svg>
<div class="t" style="right:1035px;top:1025.65px;font-size:21px;color:#111;font-weight:bold;font-style:normal;">380</div>
<svg style="position:absolute;left:0px;top:0px;pointer-events:none" width="2302" height="1271" viewBox="0 0 2302 1271"><path d="M941.10 1087.25A120.3 120.3 0 0 1 969.22 1091.46L962.34 1116.63A94.2 94.2 0 0 0 940.32 1113.34Z" fill="#0766f6" stroke="#0766f6" stroke-width="6.4" stroke-linejoin="round"/><path d="M979.07 1094.61A120.3 120.3 0 0 1 1032.02 1133.08L1011.51 1149.23A94.2 94.2 0 0 0 970.05 1119.10Z" fill="#0047ab" stroke="#0047ab" stroke-width="6.4" stroke-linejoin="round"/><path d="M1038.06 1141.48A120.3 120.3 0 1 1 932.85 1087.29L933.86 1113.37A94.2 94.2 0 1 0 1016.25 1155.80Z" fill="#03296b" stroke="#03296b" stroke-width="6.4" stroke-linejoin="round"/></svg>
<div style="position:absolute;left:299px;top:534px;width:296px;height:397px;background:#fff;border-radius:9px;box-shadow:0 1px 6px rgba(0,0,0,0.16)"></div>
<div style="position:absolute;left:317px;top:805px;width:259px;height:36px;background:#c6dcfb;border-radius:5px"></div>
<svg style="position:absolute;left:325px;top:560.2px;" width="22" height="20" viewBox="0 0 22 20"><circle cx="9.3" cy="5.9" r="4.1" stroke="#1c1c1c" fill="none" stroke-width="1.6" stroke-linecap="round" stroke-linejoin="round"/><path d="M1 18C1.2 14.5 4 12.5 8.8 12.5C10 12.5 11 12.6 11.8 12.9M1 18H11.5" stroke="#1c1c1c" fill="none" stroke-width="1.6" stroke-linecap="round" stroke-linejoin="round"/><circle cx="16.4" cy="14.8" r="4.7" fill="#fff"/><circle cx="16.4" cy="14.8" r="3.7" fill="#1c1c1c"/><path d="M16.4 14.8V10.600000000000001M16.4 14.8H20.599999999999998" stroke="#fff" stroke-width="0.9"/></svg>
<div class="t" style="left:362.5px;top:561.55px;font-size:16.3px;color:#1c1c1c;font-weight:normal;font-style:normal;">Users</div>
<svg style="position:absolute;left:325px;top:596.3000000000001px;" width="22" height="20" viewBox="0 0 22 20"><path d="M2 15.5V2.2C2 1.3 2.6 0.8 3.4 0.8H15.6C16.4 0.8 17 1.3 17 2.2V9.5M10.5 15.5H3.5C2.6 15.5 2 16.1 2 16.9C2 17.6 2.6 18.1 3.5 18.1H10.5" stroke="#1c1c1c" fill="none" stroke-width="1.6" stroke-linecap="round" stroke-linejoin="round"/><path d="M6.5 5.9H13.5M6.5 8.7H13.5" stroke="#1c1c1c" fill="none" stroke-width="1.6" stroke-linecap="round" stroke-linejoin="round" stroke-width="1.7"/><circle cx="15.2" cy="14.2" r="4.7" fill="#fff"/><circle cx="15.2" cy="14.2" r="3.7" fill="#1c1c1c"/><path d="M15.2 14.2V10.0M15.2 14.2H19.4" stroke="#fff" stroke-width="0.9"/></svg>
<div class="t" style="left:362.5px;top:597.65px;font-size:16.3px;color:#1c1c1c;font-weight:normal;font-style:normal;">Courses</div>
<svg style="position:absolute;left:325px;top:632.4000000000001px;" width="22" height="20" viewBox="0 0 22 20"><path d="M15.3 7.5H7.5C5.5 7.5 4.4 8.7 4.4 10C4.4 11.3 5.5 12.4 7.5 12.4H13.8C15.7 12.4 16.7 13.6 16.7 15C16.7 16.4 15.7 17.4 13.8 17.4H3.9M15.3 7.5V1.8" stroke="#1c1c1c" fill="none" stroke-width="1.6" stroke-linecap="round" stroke-linejoin="round"/><path d="M15.3 1.2L19 3.2L15.3 5.2Z" fill="#1c1c1c" stroke="#1c1c1c" stroke-width="0.8" stroke-linejoin="round"/></svg>
<div class="t" style="left:362.5px;top:633.75px;font-size:16.3px;color:#1c1c1c;font-weight:normal;font-style:normal;">Learning paths</div>
<svg style="position:absolute;left:325px;top:668.5px;" width="22" height="20" viewBox="0 0 22 20"><path d="M9.3 0.8L18.3 4.8L9.3 8.8L0.4 4.8Z" stroke="#1c1c1c" fill="none" stroke-width="1.6" stroke-linecap="round" stroke-linejoin="round"/><path d="M0.6 9L9.3 13L11.5 12M0.6 13.2L9.3 17.2L10.8 16.5" stroke="#1c1c1c" fill="none" stroke-width="1.6" stroke-linecap="round" stroke-linejoin="round"/><circle cx="15.8" cy="14.6" r="4.7" fill="#fff"/><circle cx="15.8" cy="14.6" r="3.7" fill="#1c1c1c"/><path d="M15.8 14.6V10.399999999999999M15.8 14.6H20.0" stroke="#fff" stroke-width="0.9"/></svg>
<div class="t" style="left:362.5px;top:669.85px;font-size:16.3px;color:#1c1c1c;font-weight:normal;font-style:normal;">Branches</div>
<svg style="position:absolute;left:325px;top:704.6px;" width="22" height="20" viewBox="0 0 22 20"><circle cx="3.8" cy="3.4" r="2.7" fill="#1c1c1c"/><circle cx="16.8" cy="3.4" r="2.7" fill="#1c1c1c"/><path d="M-1 12.3C-0.8 9.3 0.8 7.6 3.3 7.6H6.3C6.8 8.8 7 10 7 12.3Z" fill="#1c1c1c"/><circle cx="10.1" cy="8.4" r="2.5" stroke="#1c1c1c" fill="none" stroke-width="1.6" stroke-linecap="round" stroke-linejoin="round"/><path d="M4 18.1C4.3 14.8 6.5 13.1 10.1 13.1H11.8M4 18.1H11.5" stroke="#1c1c1c" fill="none" stroke-width="1.6" stroke-linecap="round" stroke-linejoin="round"/><circle cx="17.6" cy="12.6" r="4.6" fill="#fff"/><circle cx="17.6" cy="12.6" r="3.6" fill="#1c1c1c"/><path d="M17.6 12.6V8.5M17.6 12.6H21.700000000000003" stroke="#fff" stroke-width="0.9"/></svg>
<div class="t" style="left:362.5px;top:705.95px;font-size:16.3px;color:#1c1c1c;font-weight:normal;font-style:normal;">Groups</div>
<svg style="position:absolute;left:325px;top:740.7px;" width="22" height="20" viewBox="0 0 22 20"><path d="M3.8 18.2V14.6C1.9 13.1 0.9 11 0.9 8.6C0.9 4.2 4.5 0.9 9.2 0.9C13.6 0.9 17 3.9 17.3 8L19 11.6H16.9V13.9C16.9 15.1 16.1 15.7 14.9 15.7H12.4V18.2" stroke="#1c1c1c" fill="none" stroke-width="1.6" stroke-linecap="round" stroke-linejoin="round"/><circle cx="9" cy="8.3" r="3.3" fill="#1c1c1c"/><circle cx="9" cy="8.3" r="1.2" fill="#fff"/><path d="M9 4V12.6M4.7 8.3H13.3M6 5.3L12 11.3M6 11.3L12 5.3" stroke="#1c1c1c" stroke-width="1.6" stroke-linecap="round"/><circle cx="9" cy="8.3" r="1.2" fill="#fff"/></svg>
<div class="t" style="left:362.5px;top:742.05px;font-size:16.3px;color:#1c1c1c;font-weight:normal;font-style:normal;">Learning activities</div>
<svg style="position:absolute;left:325px;top:776.8000000000001px;" width="22" height="20" viewBox="0 0 22 20"><path d="M1.6 2V16.8H19.2" stroke="#1c1c1c" fill="none" stroke-width="1.6" stroke-linecap="round" stroke-linejoin="round"/><circle cx="7.9" cy="5.5" r="0.95" fill="#1c1c1c"/><circle cx="15.7" cy="4.8" r="0.95" fill="#1c1c1c"/><circle cx="10.7" cy="9" r="0.95" fill="#1c1c1c"/><circle cx="6.5" cy="11.9" r="0.95" fill="#1c1c1c"/><circle cx="14.3" cy="11.9" r="0.95" fill="#1c1c1c"/></svg>
<div class="t" style="left:362.5px;top:778.15px;font-size:16.3px;color:#1c1c1c;font-weight:normal;font-style:normal;">Training matrix</div>
<svg style="position:absolute;left:325px;top:812.9000000000001px;" width="22" height="20" viewBox="0 0 22 20"><path d="M-0.5 9.2H21.2" stroke="#1c1c1c" fill="none" stroke-width="1.6" stroke-linecap="round" stroke-linejoin="round"/><circle cx="3" cy="4.2" r="2.3" stroke="#1c1c1c" fill="none" stroke-width="1.6" stroke-linecap="round" stroke-linejoin="round"/><circle cx="17.1" cy="4.2" r="2.3" stroke="#1c1c1c" fill="none" stroke-width="1.6" stroke-linecap="round" stroke-linejoin="round"/><circle cx="10" cy="15.6" r="2.3" stroke="#1c1c1c" fill="none" stroke-width="1.6" stroke-linecap="round" stroke-linejoin="round"/><path d="M3 6.5V9.2M17.1 6.5V9.2M10 9.2V13.3" stroke="#1c1c1c" fill="none" stroke-width="1.6" stroke-linecap="round" stroke-linejoin="round"/></svg>
<div class="t" style="left:362.5px;top:814.25px;font-size:16.3px;color:#1c1c1c;font-weight:normal;font-style:normal;">Timeline</div>
<svg style="position:absolute;left:325px;top:849.0px;" width="22" height="20" viewBox="0 0 22 20"><path d="M2.2 3.4C2.2 2.6 2.8 2 3.6 2H17C17.8 2 18.4 2.6 18.4 3.4V12.4L13.2 17.6H3.6C2.8 17.6 2.2 17 2.2 16.2Z" stroke="#1c1c1c" fill="none" stroke-width="1.6" stroke-linecap="round" stroke-linejoin="round"/><path d="M18.4 12.2H14C13.5 12.2 13.2 12.5 13.2 13V17.6Z" fill="#1c1c1c" stroke="#1c1c1c" stroke-width="1.2" stroke-linejoin="round"/><circle cx="5.8" cy="5.3" r="0.85" fill="#1c1c1c"/><circle cx="5.8" cy="8.7" r="0.85" fill="#1c1c1c"/><circle cx="5.8" cy="12" r="0.85" fill="#1c1c1c"/></svg>
<div class="t" style="left:362.5px;top:850.35px;font-size:16.3px;color:#1c1c1c;font-weight:normal;font-style:normal;">Custom</div>
<svg style="position:absolute;left:325px;top:885.1000000000001px;" width="22" height="20" viewBox="0 0 22 20"><path d="M1.8 2.1V16.3H19.2" stroke="#1c1c1c" fill="none" stroke-width="1.6" stroke-linecap="round" stroke-linejoin="round"/><path d="M5 8.3L8.6 4.9L11.8 7.8L16.2 3.6" stroke="#1c1c1c" fill="none" stroke-width="1.6" stroke-linecap="round" stroke-linejoin="round"/><path d="M13.4 3.2H16.8V6.6" stroke="#1c1c1c" fill="none" stroke-width="1.6" stroke-linecap="round" stroke-linejoin="round"/><path d="M11.8 9.5L16.8 13.2M16.8 9.8V13.2H13.4" stroke="#1c1c1c" fill="none" stroke-width="1.6" stroke-linecap="round" stroke-linejoin="round"/></svg>
<div class="t" style="left:362.5px;top:886.45px;font-size:16.3px;color:#1c1c1c;font-weight:normal;font-style:normal;">Analytics</div>
<svg style="position:absolute;left:0px;top:0px;pointer-events:none" width="2302" height="1271" viewBox="0 0 2302 1271"><path d="M452 818.8L514.70 847.24A38.5 38.5 0 1 1 460.60 887.11Z" fill="#08a5eb"/></svg>
<svg style="position:absolute;left:0px;top:0px;pointer-events:none" width="2302" height="1271" viewBox="0 0 2302 1271"><path d="M489.6 869.8L503.6 864.2V899H498.6V870.8L489.6 873.9Z" fill="#fff"/></svg>
</div>
</body></html>
